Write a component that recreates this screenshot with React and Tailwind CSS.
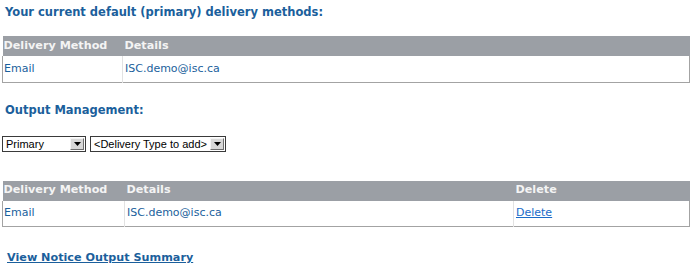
const BLUE = "text-[#1b5f9c]";

function FakeSelect({ label, width }) {
  return (
    <div className={`flex h-[16px] items-stretch border border-[#3a3a3a] bg-white ${width}`}>
      <span className="flex-1 overflow-hidden whitespace-nowrap pl-[3px] font-['Liberation_Sans',Arial,sans-serif] text-[11px] leading-[14px] text-black">
        {label}
      </span>
      <span className="m-[1px] flex w-[14px] items-center justify-center border border-t-[#f4f4f4] border-l-[#f4f4f4] border-r-[#6e6e6e] border-b-[#6e6e6e] bg-[#d8d8d8]">
        <svg width="7" height="4" viewBox="0 0 7 4">
          <path d="M0 0h7L3.5 4z" fill="#000" />
        </svg>
      </span>
    </div>
  );
}

function Grid({ columns, rows }) {
  return (
    <table className="w-[688px] table-fixed border-collapse text-[11px]">
      <thead>
        <tr className="h-[20px] bg-[#9b9fa5]">
          {columns.map((c, j) => (
            <th
              key={c.label}
              className={`${c.width} ${j === 0 ? "pl-[1px]" : "pl-[2px]"} text-left text-[11.2px] font-bold text-[#f4f4f4]`}
            >
              {c.label}
            </th>
          ))}
        </tr>
      </thead>
      <tbody>
        {rows.map((r, i) => (
          <tr key={i} className="h-[26px] border border-t-0 border-[#a3a3a3] bg-white">
            {r.map((cell, j) => (
              <td key={j} className={j > 0 ? "border-l border-[#e2e2e2] pl-[2px]" : "pl-[1px]"}>
                {cell}
              </td>
            ))}
          </tr>
        ))}
      </tbody>
    </table>
  );
}

export default function App() {
  return (
    <div className={`h-[270px] w-[700px] overflow-hidden bg-white font-['DejaVu_Sans',Verdana,sans-serif] ${BLUE}`}>
      <h2 className="pl-[5px] pt-[5px] text-[11.5px] leading-[14px] font-bold">
        Your current default (primary) delivery methods:
      </h2>

      <div className="mt-[17px] pl-[2px]">
        <Grid
          columns={[
            { label: "Delivery Method", width: "w-[120px]" },
            { label: "Details", width: "" },
          ]}
          rows={[["Email", "ISC.demo@isc.ca"]]}
        />
      </div>

      <h2 className="mt-[20px] pl-[5px] text-[11.5px] leading-[14px] font-bold">Output Management:</h2>

      <div className="mt-[19px] flex gap-[4px] pl-[2px]">
        <FakeSelect label="Primary" width="w-[84px]" />
        <FakeSelect label="<Delivery Type to add>" width="w-[136px]" />
      </div>

      <div className="mt-[29px] pl-[2px]">
        <Grid
          columns={[
            { label: "Delivery Method", width: "w-[122px]" },
            { label: "Details", width: "w-[389px]" },
            { label: "Delete", width: "" },
          ]}
          rows={[
            [
              "Email",
              "ISC.demo@isc.ca",
              <a href="#" className="text-[#1a6bc9] underline">
                Delete
              </a>,
            ],
          ]}
        />
      </div>

      <a href="#" className="mt-[24px] ml-[7px] inline-block text-[11.2px] leading-[14px] font-bold underline">
        View Notice Output Summary
      </a>
    </div>
  );
}
